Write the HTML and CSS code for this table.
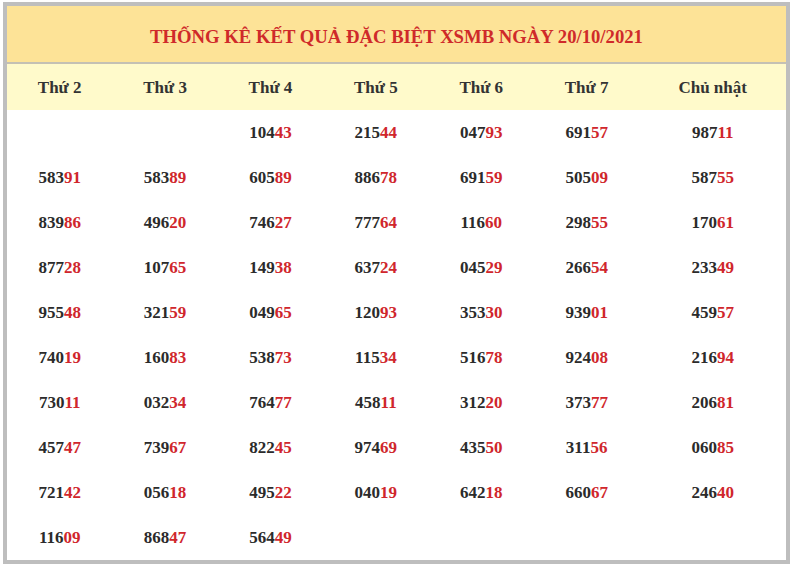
FILE: index.html
```html
<!DOCTYPE html>
<html lang="vi">
<head>
<meta charset="utf-8">
<title>Thống kê kết quả đặc biệt XSMB</title>
<link rel="stylesheet" href="styles.css">
</head>
<body>
<div class="box">
  <div class="title">THỐNG KÊ KẾT QUẢ ĐẶC BIỆT XSMB NGÀY 20/10/2021</div>
  <table class="stats">
    <colgroup>
      <col class="c"><col class="c"><col class="c"><col class="c"><col class="c"><col class="c"><col>
    </colgroup>
    <thead>
      <tr><th>Thứ 2</th><th>Thứ 3</th><th>Thứ 4</th><th>Thứ 5</th><th>Thứ 6</th><th>Thứ 7</th><th>Chủ nhật</th></tr>
    </thead>
    <tbody>
      <tr><td></td><td></td><td>104<b>43</b></td><td>215<b>44</b></td><td>047<b>93</b></td><td>691<b>57</b></td><td>987<b>11</b></td></tr>
      <tr><td>583<b>91</b></td><td>583<b>89</b></td><td>605<b>89</b></td><td>886<b>78</b></td><td>691<b>59</b></td><td>505<b>09</b></td><td>587<b>55</b></td></tr>
      <tr><td>839<b>86</b></td><td>496<b>20</b></td><td>746<b>27</b></td><td>777<b>64</b></td><td>116<b>60</b></td><td>298<b>55</b></td><td>170<b>61</b></td></tr>
      <tr><td>877<b>28</b></td><td>107<b>65</b></td><td>149<b>38</b></td><td>637<b>24</b></td><td>045<b>29</b></td><td>266<b>54</b></td><td>233<b>49</b></td></tr>
      <tr><td>955<b>48</b></td><td>321<b>59</b></td><td>049<b>65</b></td><td>120<b>93</b></td><td>353<b>30</b></td><td>939<b>01</b></td><td>459<b>57</b></td></tr>
      <tr><td>740<b>19</b></td><td>160<b>83</b></td><td>538<b>73</b></td><td>115<b>34</b></td><td>516<b>78</b></td><td>924<b>08</b></td><td>216<b>94</b></td></tr>
      <tr><td>730<b>11</b></td><td>032<b>34</b></td><td>764<b>77</b></td><td>458<b>11</b></td><td>312<b>20</b></td><td>373<b>77</b></td><td>206<b>81</b></td></tr>
      <tr><td>457<b>47</b></td><td>739<b>67</b></td><td>822<b>45</b></td><td>974<b>69</b></td><td>435<b>50</b></td><td>311<b>56</b></td><td>060<b>85</b></td></tr>
      <tr><td>721<b>42</b></td><td>056<b>18</b></td><td>495<b>22</b></td><td>040<b>19</b></td><td>642<b>18</b></td><td>660<b>67</b></td><td>246<b>40</b></td></tr>
      <tr><td>116<b>09</b></td><td>868<b>47</b></td><td>564<b>49</b></td><td></td><td></td><td></td><td></td></tr>
    </tbody>
  </table>
</div>
</body>
</html>
```
FILE: styles.css
```css
html, body {
  margin: 0;
  padding: 0;
  background: #ffffff;
}
body {
  padding: 2px 1px 0 3px;
  font-family: "Liberation Serif", "Times New Roman", serif;
}
.box {
  width: 779px;
  border: 4px solid #bebebe;
  background: #ffffff;
}
.title {
  height: 58px;
  background: #fde397;
  border-bottom: 2px solid #c4c0b4;
  color: #cf2a2a;
  font-weight: bold;
  font-size: 18.7px;
  display: flex;
  align-items: center;
  justify-content: center;
  padding-top: 5px;
  box-sizing: border-box;
}
.stats {
  width: 100%;
  border-collapse: collapse;
  table-layout: fixed;
}
.stats col.c {
  width: 105.4px;
}
.stats th {
  height: 46px;
  background: #fffacb;
  color: #333333;
  font-size: 17px;
  font-weight: bold;
  text-align: center;
  padding: 1px 0 0;
  box-sizing: border-box;
}
.stats td {
  height: 45px;
  padding: 0;
  box-sizing: border-box;
  text-align: center;
  font-size: 17px;
  font-weight: bold;
  color: #2b2b2b;
}
.stats td b {
  color: #d0262c;
}
```
